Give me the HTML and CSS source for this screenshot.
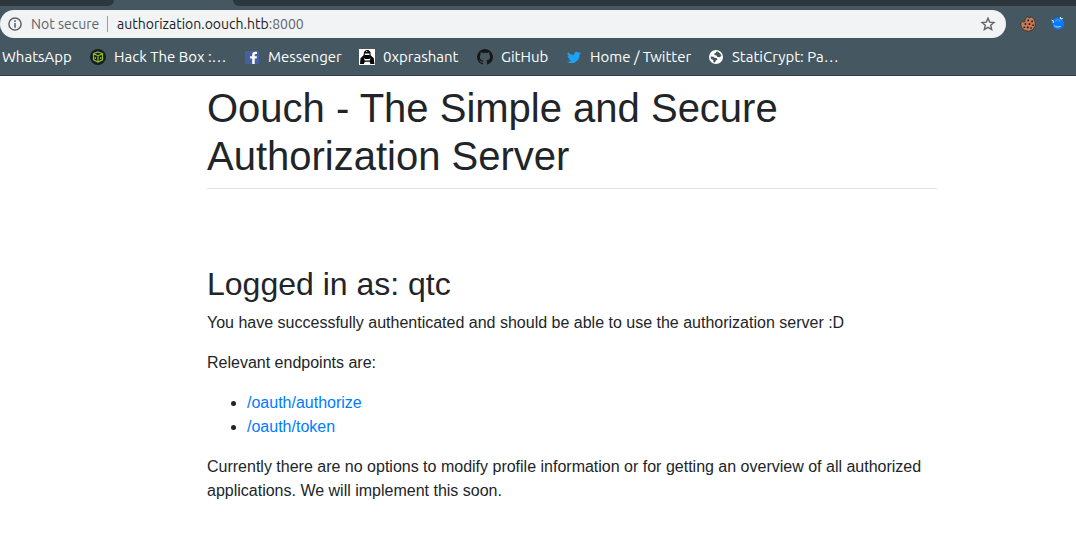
FILE: index.html
```
<!DOCTYPE html>
<html lang="en">
<head>
<meta charset="utf-8">
<title>Oouch - Authorization Server</title>
<link rel="stylesheet" href="styles.css">
</head>
<body>
<header class="browser">
  <div class="tabs"><div class="tab-left"></div><div class="tab-active"></div><div class="tab-right"></div></div>
  <div class="toolbar">
    <div class="omnibox">
      <svg class="info" viewBox="0 0 14 14" aria-hidden="true"><circle cx="7" cy="7" r="6.1" fill="none" stroke="#5f6368" stroke-width="1.5"/><path d="M6.2 3.3h1.6v1.6H6.2zM6.2 6.1h1.6v4.6H6.2z" fill="#5f6368"/></svg>
      <span class="security">Not secure</span>
      <span class="address"><span class="host">authorization.oouch.htb</span>:8000</span>
      <button class="star" aria-label="Bookmark this page"><svg viewBox="0 0 16 16"><path d="M8 2.2l1.7 3.9 4.3.4-3.3 2.8 1 4.2L8 11.3l-3.7 2.2 1-4.2L2 6.5l4.3-.4z" fill="none" stroke="#5f6368" stroke-width="1.4"/></svg></button>
    </div>
    <button class="extension" aria-label="Cookies"><svg viewBox="0 0 16 16"><path d="M6.6.8l1.6.1.7 1 2.5-.8 2.2 1.4 1.6 3.4-.1 4.3-2.5 3.6-4 1.5-4.2-1.1L1.2 11 .8 7.2 2 5.8l2.8.1.2-2z" fill="#c67b56" stroke="#35272a" stroke-width=".7"/><path d="M7.4 3.6h1.6v1.6H7.4zM11.3 4.6h1.6v1.6h-1.6zM4.6 7.2h1.7v1.6H4.6zM8.7 7.2h1.7v1.7H8.7zM12.3 8.4h1.4v1.5h-1.4zM3.5 10.7h1.6v1.4H3.5zM6.9 10.6h1.7v1.6H6.9zM10.4 11.3h1.4v1.4h-1.4z" fill="#1d1718"/></svg></button>
    <button class="extension" aria-label="Blue extension"><svg viewBox="0 0 16 16"><path d="M2 4.2l2-1 2.4-1.5 3.2-.3L12 3l1.9 2-.1 4.7-2.6 3.1-3.8.9-3.2-1.6-1.6-3z" fill="#087bff"/><path d="M1.6 4.1l1.8.8-.2 2M10.4 1l.4 2 2-.6" fill="none" stroke="#e5f4ef" stroke-width="1"/><path d="M4.2 9.6l1.4 1.1 2.6.3 2.4-.6" fill="none" stroke="#b9defa" stroke-width="1"/><path d="M5 5.4l3-1.8 2.6 1.7" fill="none" stroke="#44a4ff"/></svg></button>
  </div>
  <nav class="bookmarks" aria-label="Bookmarks">
    <a href="#">WhatsApp</a>
    <a href="#"><svg viewBox="0 0 16 16"><circle cx="8" cy="8" r="8" fill="#171d24"/><path d="M8 3l4.5 1.7v6.2L8 13l-4.5-2.1V4.7zM3.5 4.9L8 6.7l4.5-1.8M8 6.7V13M5.3 8v2M10.7 8v2" fill="none" stroke="#8fbc15" stroke-width="1.2"/></svg><span>Hack The Box :…</span></a>
    <a href="#"><svg viewBox="0 0 16 16"><path d="M1 2h14v13H1z" fill="#4460a0"/><path d="M8.2 15V9.5H6.1V7.2h2.1V5.9c0-2.2 1.1-3.1 3-3.1H13V5h-1.2c-.9 0-1.1.4-1.1 1.1v1.1h2.2l-.3 2.3h-1.9V15z" fill="#fff"/></svg><span>Messenger</span></a>
    <a href="#"><svg viewBox="0 0 16 16"><path d="M0 0h16v16H0z" fill="#fff"/><path d="M4.6 6.2L5 3.1 7 1.1h2.5l2 2 .2 3.4 3 2.4.7 6.1h-4l-.7-2.3H5.7L4.9 15H1l.5-5.7z" fill="#080808"/><path d="M5.8 4.6h4.7v1.5H5.8zM4.9 9l1.4.9h3.8l1.4-.9-.8 2.6H5.7zM6.9 1.8l1.7.8-1.1.7z" fill="#fff"/></svg><span>0xprashant</span></a>
    <a href="#"><svg viewBox="0 0 16 16"><path d="M8 0a8 8 0 0 0-2.5 15.6c.4.1.5-.2.5-.4v-1.5c-2.2.5-2.7-.9-2.7-.9-.4-.9-.9-1.2-.9-1.2-.7-.5.1-.5.1-.5.8.1 1.2.8 1.2.8.7 1.2 1.9.9 2.3.7.1-.5.3-.9.5-1.1-1.8-.2-3.6-.9-3.6-4 0-.9.3-1.6.8-2.1-.1-.2-.4-1 .1-2.1 0 0 .7-.2 2.2.8a8 8 0 0 1 4 0c1.5-1 2.2-.8 2.2-.8.4 1.1.2 1.9.1 2.1.5.6.8 1.3.8 2.1 0 3.1-1.9 3.7-3.7 3.9.3.3.6.8.6 1.6v2.2c0 .2.1.5.5.4A8 8 0 0 0 8 0z" fill="#181717"/></svg><span>GitHub</span></a>
    <a href="#"><svg viewBox="0 0 16 16"><path d="M15 4.1c-.5.2-1.1.4-1.6.4.6-.3 1-.9 1.2-1.5-.6.3-1.2.5-1.8.7a2.9 2.9 0 0 0-4.9 2.6A8 8 0 0 1 2 3.3a2.9 2.9 0 0 0 .9 3.8c-.5 0-.9-.1-1.3-.3 0 1.4 1 2.5 2.3 2.8-.4.1-.9.1-1.3 0 .4 1.2 1.4 2 2.7 2A6 6 0 0 1 1 12.8a8.2 8.2 0 0 0 12.6-7.3c.6-.4 1-.9 1.4-1.4z" fill="#1da1f2"/></svg><span>Home / Twitter</span></a>
    <a href="#"><svg viewBox="0 0 16 16"><circle cx="8" cy="8" r="7" fill="#fff"/><path d="M9.4 2.6l2.9 1.8 1.1 2.5-1.8 1.3-2.2-.2-.9-1.6-2-.4-.2-1.4 1.5-.7.4-1.1zM2.6 7.4l2.8.3 1.2 1.1 2 .3.9 1.6-1.6.9-.9 1.9-1.6-.3-.2-2.1-2-1.1z" fill="#455861"/></svg><span>StatiCrypt: Pa…</span></a>
  </nav>
</header>
<main class="page">
  <h1>Oouch - The Simple and Secure Authorization Server</h1>
  <section>
    <h2>Logged in as: qtc</h2>
    <p>You have successfully authenticated and should be able to use the authorization server :D</p>
    <p>Relevant endpoints are:</p>
    <ul>
      <li><a href="#">/oauth/authorize</a></li>
      <li><a href="#">/oauth/token</a></li>
    </ul>
    <p>Currently there are no options to modify profile information or for getting an overview of all authorized applications. We will implement this soon.</p>
  </section>
</main>
</body>
</html>
```
FILE: styles.css
```
* { box-sizing: border-box; }
body {
  margin: 0;
  background: #fff;
  color: #212529;
  font: 16px/24px "Liberation Sans", Arial, sans-serif;
}
button {
  padding: 0;
  border: 0;
  background: none;
}
svg { display: block; flex: none; width: 16px; height: 16px; }

.browser {
  background: #455861;
  border-bottom: 1px solid #343f48;
  font-family: Ubuntu, "Noto Sans", sans-serif;
}
.tabs {
  display: grid;
  grid-template-columns: 114px 119px 1fr;
  height: 6px;
}
.tab-left, .tab-right { background: #2c373d; }
.tab-left { border-bottom-right-radius: 6px; }
.tab-right { border-bottom-left-radius: 6px; }
.toolbar {
  display: flex;
  align-items: center;
  gap: 14px;
  padding: 4px 10px 0 0;
}
.omnibox {
  display: flex;
  flex: 1;
  align-items: center;
  height: 28px;
  padding: 0 10px 0 8px;
  border-radius: 14px;
  background: #f1f3f5;
  color: #5f6368;
  font-size: 14px;
  line-height: 20px;
}
.info { width: 14px; height: 14px; }
.security {
  width: 77px;
  margin-left: 9px;
  border-right: 1px solid #9a9da1;
  line-height: 16px;
  white-space: nowrap;
}
.address { flex: 1; margin-left: 9px; }
.host { color: #202124; }

.bookmarks {
  display: grid;
  grid-template-columns: 88px 154px 115px 118px 89px 142px 1fr;
  padding: 8px 0 7px 2px;
  font-size: 15px;
  line-height: 22px;
}
.bookmarks a {
  display: flex;
  align-items: center;
  gap: 8px;
  color: #fff;
  text-decoration: none;
  white-space: nowrap;
}

.page { padding: 8px 139px 32px 207px; }
h1, h2 { margin: 0; font-weight: 400; }
h1 {
  padding-bottom: 8px;
  border-bottom: 1px solid #dee2e6;
  font-size: 40px;
  line-height: 48px;
}
section { padding-top: 76px; }
h2 { margin-bottom: 8px; font-size: 32px; line-height: 38px; }
p, ul { margin: 0 0 16px; }
ul { padding-left: 40px; }
li a { color: #007bff; text-decoration: none; }
```
